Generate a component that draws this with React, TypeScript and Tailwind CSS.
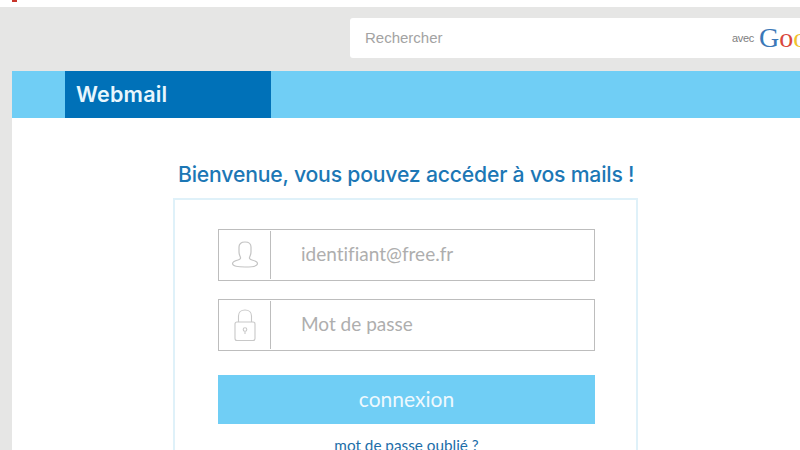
function UserIcon() {
  return (
    <svg width="28" height="28" viewBox="0 0 28 28" fill="none" stroke="#c4c4c4" strokeWidth="1.200">
      <path d="M8 6c0-3.500 2.500-5 6-5s6 1.500 6 5v5c0 2.500-1 4-1.500 5.500-.3 1 .5 2 2.500 2.500 3 .8 5.500 1.800 5.500 3.500 0 2.500-5.500 3.500-12.500 3.500S1.500 25 1.500 22.500c0-1.700 2.500-2.700 5.500-3.500 2-.5 2.800-1.500 2.500-2.500C9 15 8 13.500 8 11z" />
    </svg>
  );
}

function LockIcon() {
  return (
    <svg width="22" height="33" viewBox="0 0 22 33" fill="none" stroke="#c8c8c8" strokeWidth="1.100">
      <path d="M4.500 13V7C4.500 3.500 7 1 11 1s6.500 2.500 6.500 6v6" />
      <rect x="1" y="13" width="20" height="18.500" rx="2" />
      <circle cx="11" cy="20.500" r="1.800" />
      <path d="M11 22.500v2.500" />
    </svg>
  );
}

function Field({ icon, text, pl }: { icon: React.ReactNode; text: string; pl: string }) {
  return (
    <div className="flex h-[52px] items-stretch border border-[#bdbdbd] bg-white">
      <div className="my-[1px] flex w-[52px] items-center justify-center border-r border-[#bdbdbd]">{icon}</div>
      <div className={`flex flex-1 items-center pb-[2px] text-[19px] text-[#aeaeae] [font-variant-ligatures:none] ${pl}`}>{text}</div>
    </div>
  );
}

export default function App() {
  return (
    <div className="h-[450px] w-[800px] overflow-hidden bg-[#e6e6e5] font-['Lato',sans-serif]">
      <div className="relative h-[7px] bg-white">
        <div className="absolute left-[12px] top-0 h-[2px] w-[5px] bg-[#c8352b]" />
      </div>
      <div className="flex h-[64px] justify-end pt-[11px]">
        <div className="flex h-[40px] w-[450px] items-center justify-between overflow-hidden rounded-l-[3px] bg-white pl-[15px]">
          <span className="font-['Liberation_Sans',sans-serif] text-[15px] text-[#a3a3a3]">Rechercher</span>
          <div className="flex w-[68px] items-center gap-[5px] overflow-hidden">
            <span className="font-['Liberation_Sans',sans-serif] text-[11px] tracking-[-0.3px] text-[#808080]">avec</span>
            <span className="font-['Liberation_Serif',serif] text-[28px] leading-none whitespace-nowrap">
              <span className="text-[#3b78b8]">G</span>
              <span className="text-[#d9473d]">o</span>
              <span className="text-[#f0c22e]">o</span>
            </span>
          </div>
        </div>
      </div>
      <div className="ml-[12px] h-[379px] bg-white">
        <div className="flex h-[47px] bg-[#70cef5] pl-[53px]">
          <div className="flex w-[206px] items-center bg-[#0071b8] pl-[11px] font-['Inter',sans-serif] text-[21.500px] font-semibold tracking-[0.2px] text-[#e8f6fd]">
            Webmail
          </div>
        </div>
        <h1 className="mt-[43px] ml-[166px] font-['Inter',sans-serif] text-[21.200px] leading-[26px] font-medium tracking-[-0.2px] whitespace-nowrap text-[#1c77b5]">
          Bienvenue, vous pouvez accéder à vos mails !
        </h1>
        <div className="mt-[11px] ml-[161px] h-[300px] w-[465px] border-2 border-[#dff1f9] pt-[29px] pr-[41px] pl-[43px]">
          <Field icon={<UserIcon />} text="identifiant@free.fr" pl="pl-[30px]" />
          <div className="mt-[18px]">
            <Field icon={<LockIcon />} text="Mot de passe" pl="pl-[30px]" />
          </div>
          <div className="mt-[24px] flex h-[49px] items-center justify-center bg-[#70cef5] pb-[2px] text-[21px] text-[#eef9fe]">
            connexion
          </div>
          <div className="mt-[10px] text-center text-[15.300px] text-[#1c6ea8]">mot de passe oublié ?</div>
        </div>
      </div>
    </div>
  );
}
